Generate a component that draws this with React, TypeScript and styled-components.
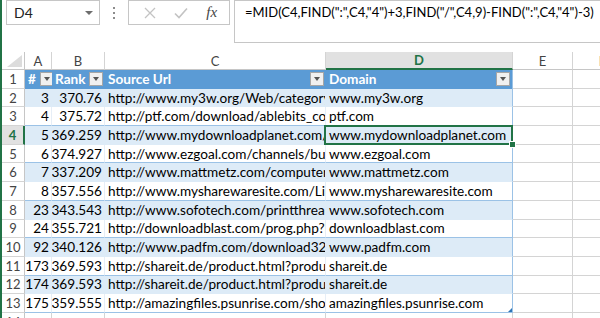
import React from "react";
import styled, { createGlobalStyle, css } from "styled-components";

const GREEN = "#217346";
const GRID = "#d4d4d4";
const HEAD_BLUE = "#5b9bd5";
const BAND_BLUE = "#ddebf7";
const TABLE_LINE = "#9bc2e6";

const GlobalStyle = createGlobalStyle`
  html, body {
    margin: 0;
    padding: 0;
    background: #fff;
  }
  body {
    font-family: Lato, "Open Sans", "Liberation Sans", sans-serif;
    color: #000;
  }
`;

const Window = styled.div`
  width: 600px;
  height: 318px;
  overflow: hidden;
  box-sizing: border-box;
  border-left: 2px solid ${GREEN};
  display: flex;
  flex-direction: column;
`;

const FormulaBar = styled.div`
  display: flex;
  align-items: flex-start;
  height: 52px;
  flex: none;
`;

const NameBox = styled.div`
  box-sizing: border-box;
  width: 94px;
  height: 25px;
  margin-left: 4px;
  border: 1px solid #c6c6c6;
  display: flex;
  align-items: center;
  justify-content: space-between;
  padding: 0 6px 0 7px;
  font-size: 14px;
  color: #222;
`;

const DropArrow = styled.span`
  width: 0;
  height: 0;
  border-left: 4px solid transparent;
  border-right: 4px solid transparent;
  border-top: 4px solid #6d6d6d;
`;

const Dots = styled.div`
  margin-left: 13px;
  height: 25px;
  display: flex;
  flex-direction: column;
  justify-content: center;
  gap: 3px;
  span {
    width: 2px;
    height: 2px;
    background: #8c8c8c;
  }
`;

const ButtonBox = styled.div`
  box-sizing: border-box;
  width: 102px;
  height: 25px;
  margin-left: 13px;
  border: 1px solid #c6c6c6;
  display: flex;
  align-items: center;
  justify-content: space-around;
  padding: 0 2px 0 6px;
`;

const BarButton = styled.span<{ $disabled?: boolean }>`
  display: flex;
  align-items: center;
  justify-content: center;
  width: 24px;
  color: ${(p) => (p.$disabled ? "#c3c3c3" : "#444")};
`;

const Fx = styled.span`
  font-family: "Liberation Serif", serif;
  font-style: italic;
  font-size: 15px;
  color: #444;
`;

const FormulaBox = styled.div`
  box-sizing: border-box;
  flex: 1;
  height: 43px;
  margin-left: 4px;
  border: 1px solid #c6c6c6;
  border-right: none;
  padding: 3px 0 0 10px;
  font-size: 13px;
  white-space: nowrap;
  overflow: hidden;
`;

const Sheet = styled.div`
  display: grid;
  grid-template-columns: 23px 27px 53px 221px 187px 60px 60px;
  grid-template-rows: 18px repeat(14, 18.7px);
  font-size: 13.6px;
`;

const Corner = styled.div`
  border-right: 1px solid #c6c6c6;
  border-bottom: 1px solid #c6c6c6;
  display: flex;
  align-items: flex-end;
  justify-content: flex-end;
  padding: 0 2px 2px 0;
`;

const ColHead = styled.div<{ $selected?: boolean }>`
  box-sizing: border-box;
  display: flex;
  align-items: center;
  justify-content: center;
  font-size: 13px;
  color: #444;
  border-right: 1px solid ${GRID};
  border-bottom: 1px solid #c6c6c6;
  ${(p) =>
    p.$selected &&
    css`
      background: #e1e1e1;
      color: ${GREEN};
      font-weight: 700;
      border-bottom: 2px solid ${GREEN};
    `}
`;

const RowHead = styled.div<{ $selected?: boolean }>`
  box-sizing: border-box;
  display: flex;
  align-items: center;
  justify-content: center;
  font-size: 13px;
  color: #444;
  border-right: 1px solid #c6c6c6;
  border-bottom: 1px solid ${GRID};
  ${(p) =>
    p.$selected &&
    css`
      background: #e1e1e1;
      color: ${GREEN};
      font-weight: 700;
      border-right: 2px solid ${GREEN};
    `}
`;

const HeaderCell = styled.div<{ $last?: boolean }>`
  box-sizing: border-box;
  display: flex;
  align-items: center;
  gap: 4px;
  padding: 0 2px 0 3px;
  background: ${HEAD_BLUE};
  color: #fff;
  font-weight: 700;
  white-space: nowrap;
  overflow: hidden;
  border-right: ${(p) => (p.$last ? `1px solid ${TABLE_LINE}` : "none")};
`;

const FilterButton = styled.span`
  box-sizing: border-box;
  flex: none;
  margin-left: auto;
  width: 14px;
  height: 14px;
  background: #f0f0f0;
  border: 1px solid #a6a6a6;
  display: flex;
  align-items: center;
  justify-content: center;
  &::after {
    content: "";
    border-left: 3.5px solid transparent;
    border-right: 3.5px solid transparent;
    border-top: 4px solid #555;
  }
`;

const Cell = styled.div<{
  $band?: boolean;
  $num?: boolean;
  $last?: boolean;
  $active?: boolean;
  $corner?: boolean;
}>`
  position: relative;
  box-sizing: border-box;
  display: flex;
  align-items: center;
  justify-content: ${(p) => (p.$num ? "flex-end" : "flex-start")};
  padding: 0 ${(p) => (p.$num ? "2px" : "3px")};
  white-space: nowrap;
  overflow: ${(p) => (p.$active || p.$corner ? "visible" : "hidden")};
  background: ${(p) => (p.$band ? BAND_BLUE : "#fff")};
  border-bottom: 1px solid ${(p) => (p.$band ? BAND_BLUE : TABLE_LINE)};
  border-right: 1px solid
    ${(p) => (p.$last ? TABLE_LINE : p.$band ? BAND_BLUE : "#e6eef7")};
  ${(p) =>
    p.$active &&
    css`
      &::after {
        content: "";
        position: absolute;
        inset: -1px -1px -1px -2px;
        border: 2px solid ${GREEN};
        pointer-events: none;
      }
      &::before {
        content: "";
        position: absolute;
        right: -4px;
        bottom: -4px;
        width: 5px;
        height: 5px;
        background: ${GREEN};
        border: 1px solid #fff;
        z-index: 2;
      }
    `}
  ${(p) =>
    p.$corner &&
    css`
      &::after {
        content: "";
        position: absolute;
        right: 0;
        bottom: 0;
        width: 0;
        height: 0;
        border-left: 4px solid transparent;
        border-bottom: 4px solid #2e75b6;
      }
    `}
`;

const Blank = styled.div`
  border-right: 1px solid ${GRID};
  border-bottom: 1px solid ${GRID};
`;

type Row = { n: number; rank: string; url: string; domain: string };

const rows: Row[] = [
  { n: 3, rank: "370.76", url: "http://www.my3w.org/Web/category/software", domain: "www.my3w.org" },
  { n: 4, rank: "375.72", url: "http://ptf.com/download/ablebits_com/", domain: "ptf.com" },
  { n: 5, rank: "369.259", url: "http://www.mydownloadplanet.com/publisher/", domain: "www.mydownloadplanet.com" },
  { n: 6, rank: "374.927", url: "http://www.ezgoal.com/channels/business", domain: "www.ezgoal.com" },
  { n: 7, rank: "337.209", url: "http://www.mattmetz.com/computer/software", domain: "www.mattmetz.com" },
  { n: 8, rank: "357.556", url: "http://www.mysharewaresite.com/List/", domain: "www.mysharewaresite.com" },
  { n: 23, rank: "343.543", url: "http://www.sofotech.com/printthread.php", domain: "www.sofotech.com" },
  { n: 24, rank: "355.721", url: "http://downloadblast.com/prog.php?id=", domain: "downloadblast.com" },
  { n: 92, rank: "340.126", url: "http://www.padfm.com/download32/", domain: "www.padfm.com" },
  { n: 173, rank: "369.593", url: "http://shareit.de/product.html?productid=", domain: "shareit.de" },
  { n: 174, rank: "369.593", url: "http://shareit.de/product.html?productid=", domain: "shareit.de" },
  { n: 175, rank: "359.555", url: "http://amazingfiles.psunrise.com/shopping/", domain: "amazingfiles.psunrise.com" },
];

const columns = ["A", "B", "C", "D", "E", "F"];

function App() {
  return (
    <>
      <GlobalStyle />
      <Window>
        <FormulaBar>
          <NameBox>
            D4
            <DropArrow />
          </NameBox>
          <Dots>
            <span />
            <span />
            <span />
          </Dots>
          <ButtonBox>
            <BarButton $disabled>
              <svg width="12" height="12" viewBox="0 0 12 12">
                <path d="M1 1 L11 11 M11 1 L1 11" stroke="currentColor" strokeWidth="1.3" />
              </svg>
            </BarButton>
            <BarButton $disabled>
              <svg width="14" height="12" viewBox="0 0 14 12">
                <path d="M1 6.5 L5 10.5 L13 1.5" stroke="currentColor" strokeWidth="1.6" fill="none" />
              </svg>
            </BarButton>
            <BarButton>
              <Fx>fx</Fx>
            </BarButton>
          </ButtonBox>
          <FormulaBox>
            =MID(C4,FIND(":",C4,"4")+3,FIND("/",C4,9)-FIND(":",C4,"4")-3)
          </FormulaBox>
        </FormulaBar>

        <Sheet>
          <Corner>
            <svg width="15" height="12" viewBox="0 0 15 12">
              <polygon points="15,0 15,12 0,12" fill="#dcdcdc" />
            </svg>
          </Corner>
          {columns.map((c) => (
            <ColHead key={c} $selected={c === "D"}>
              {c}
            </ColHead>
          ))}

          <RowHead>1</RowHead>
          <HeaderCell>
            #<FilterButton />
          </HeaderCell>
          <HeaderCell>
            Rank<FilterButton />
          </HeaderCell>
          <HeaderCell>
            Source Url<FilterButton />
          </HeaderCell>
          <HeaderCell $last>
            Domain<FilterButton />
          </HeaderCell>
          <Blank />
          <Blank />

          {rows.map((r, i) => {
            const rowNum = i + 2;
            const band = i % 2 === 0;
            return (
              <React.Fragment key={rowNum}>
                <RowHead $selected={rowNum === 4}>{rowNum}</RowHead>
                <Cell $band={band} $num>
                  {r.n}
                </Cell>
                <Cell $band={band} $num>
                  {r.rank}
                </Cell>
                <Cell $band={band}>{r.url}</Cell>
                <Cell
                  $band={band}
                  $last
                  $active={rowNum === 4}
                  $corner={rowNum === 13}
                >
                  {r.domain}
                </Cell>
                <Blank />
                <Blank />
              </React.Fragment>
            );
          })}

          <RowHead>14</RowHead>
          {columns.map((c) => (
            <Blank key={c} />
          ))}
        </Sheet>
      </Window>
    </>
  );
}

export default App;
